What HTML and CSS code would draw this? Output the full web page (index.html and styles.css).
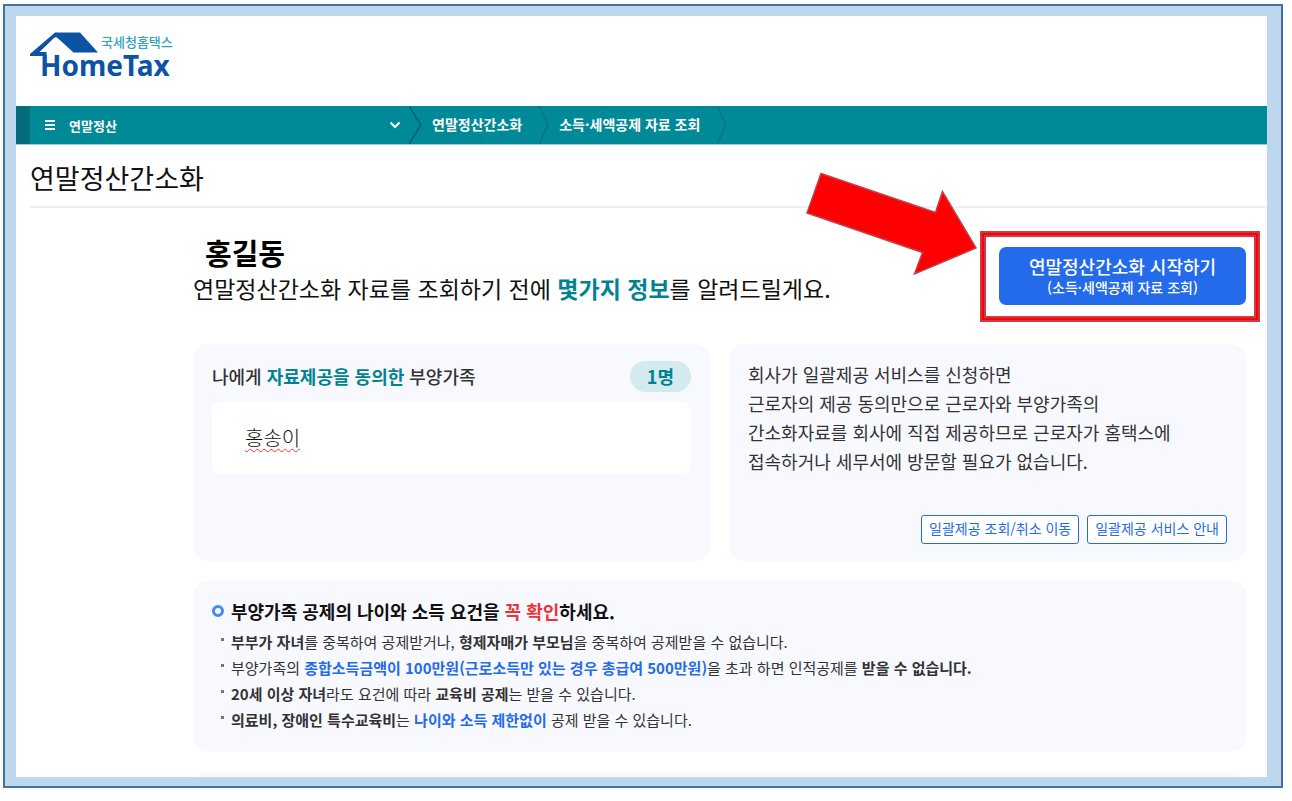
FILE: index.html
```html
<!DOCTYPE html>
<html lang="ko">
<head>
<meta charset="utf-8">
<title>연말정산간소화 - HomeTax</title>
<link rel="stylesheet" href="styles.css">
</head>
<body>
<div class="frame">
  <div class="panel">
    <header class="header">
      <a class="logo" href="#" aria-label="국세청홈택스 HomeTax">
        <svg class="logo-roof" width="69" height="24" viewBox="0 0 69 24" aria-hidden="true">
          <path fill="#0c52a5" d="M25 .5H50L68 20.5H43.500L27 5.500Q25.500 4.800 24 6L9.500 20H16.500V24H0V22Z"/>
        </svg>
        <span class="logo-ko">국세청홈택스</span>
        <span class="logo-en">HomeTax</span>
      </a>
    </header>

    <nav class="crumbs" aria-label="현재 위치">
      <button class="menu" type="button">
        <svg width="12" height="10" viewBox="0 0 12 10" aria-hidden="true"><path d="M1 1H11M1 5H11M1 9H11" stroke="#fff" stroke-width="2"/></svg>
        <span>연말정산</span>
        <svg class="menu-caret" width="12" height="8" viewBox="0 0 12 8" aria-hidden="true"><path d="M1.500 1.500L6 6L10.500 1.500" fill="none" stroke="#fff" stroke-width="2"/></svg>
      </button>
      <svg class="divider" width="13" height="38" viewBox="0 0 13 38" aria-hidden="true"><path d="M0 0L12 19L0 38" fill="none" stroke="#05616d" stroke-width="1.500"/></svg>
      <a class="crumb" href="#">연말정산간소화</a>
      <svg class="divider" width="10" height="38" viewBox="0 0 10 38" aria-hidden="true"><path d="M0 0L9 19L0 38" fill="none" stroke="#087484" stroke-width="1.500"/></svg>
      <a class="crumb" href="#">소득·세액공제 자료 조회</a>
      <svg class="divider" width="10" height="38" viewBox="0 0 10 38" aria-hidden="true"><path d="M0 0L9 19L0 38" fill="none" stroke="#087484" stroke-width="1.500"/></svg>
    </nav>

    <h1 class="title">연말정산간소화</h1>

    <main class="content">
      <section class="intro">
        <div class="greeting">
          <p class="user">홍길동</p>
          <h2 class="lead">연말정산간소화 자료를 조회하기 전에 <strong>몇가지 정보</strong>를 알려드릴게요.</h2>
        </div>
        <div class="start">
          <button class="start-button" type="button">
            <span class="start-main">연말정산간소화 시작하기</span>
            <span class="start-sub">(소득·세액공제 자료 조회)</span>
          </button>
          <span class="highlight"></span>
          <svg class="pointer" width="172" height="104" viewBox="0 0 172 104" aria-hidden="true">
            <path d="M15 1.500L129.500 40.500L136.500 19.500L170 76L108.500 102L116.500 80.500L1 41Z" fill="#f00" stroke="#c0404d" stroke-width="1.500"/>
          </svg>
        </div>
      </section>

      <div class="cards">
        <section class="card family">
          <div class="family-head">
            <h3>나에게 <strong>자료제공을 동의한</strong> 부양가족</h3>
            <span class="count">1명</span>
          </div>
          <div class="members"><span class="member">홍송이</span></div>
        </section>
        <section class="card bulk">
          <p>회사가 일괄제공 서비스를 신청하면<br>근로자의 제공 동의만으로 근로자와 부양가족의<br>간소화자료를 회사에 직접 제공하므로 근로자가 홈택스에<br>접속하거나 세무서에 방문할 필요가 없습니다.</p>
          <div class="actions">
            <button type="button">일괄제공 조회/취소 이동</button>
            <button type="button">일괄제공 서비스 안내</button>
          </div>
        </section>
      </div>

      <section class="card notice">
        <h3>부양가족 공제의 나이와 소득 요건을 <em>꼭 확인</em>하세요.</h3>
        <ul>
          <li><b>부부가 자녀</b>를 중복하여 공제받거나, <b>형제자매가 부모님</b>을 중복하여 공제받을 수 없습니다.</li>
          <li>부양가족의 <b class="blue">종합소득금액이 100만원(근로소득만 있는 경우 총급여 500만원)</b>을 초과 하면 인적공제를 <b>받을 수 없습니다.</b></li>
          <li><b>20세 이상 자녀</b>라도 요건에 따라 <b>교육비 공제</b>는 받을 수 있습니다.</li>
          <li><b>의료비, 장애인 특수교육비</b>는 <b class="blue">나이와 소득 제한없이</b> 공제 받을 수 있습니다.</li>
        </ul>
      </section>

      <section class="card next"></section>
    </main>
  </div>
</div>
</body>
</html>
```
FILE: styles.css
```css
*, *::before { box-sizing: border-box; }
body, h1, h2, h3, p, ul { margin: 0; padding: 0; }
body {
  height: 100vh;
  padding: 4px 9px 13px 3px;
  background: #fff;
  color: #333;
  font-family: "Noto Sans CJK KR", "Noto Sans", sans-serif;
}
button { font-family: inherit; cursor: pointer; }
a { text-decoration: none; }

.frame {
  height: 100%;
  padding: 10px 14px 9px 11px;
  border: 2px solid #41719c;
  background: #bdd7ee;
}
.panel { height: 100%; overflow: hidden; background: #fff; }

.header { height: 90px; padding: 16px 14px; }
.logo {
  display: grid;
  grid-template-columns: 71px auto;
  grid-template-rows: 20px 26px;
  justify-content: start;
}
.logo-roof { grid-area: 1 / 1; }
.logo-ko {
  grid-area: 1 / 2;
  color: #2ba3bd;
  font-size: 13px;
  font-weight: 500;
  line-height: 20px;
}
.logo-en {
  grid-area: 2 / 1 / 3 / 3;
  padding-left: 10px;
  color: #0c52a5;
  font-family: "Noto Sans", sans-serif;
  font-size: 28px;
  font-weight: 700;
  line-height: 26px;
}

.crumbs {
  display: flex;
  align-items: center;
  height: 38px;
  border-left: 14px solid #046b78;
  background: #008996;
  box-shadow: 0 1px 0 #9cc9ce;
}
.menu {
  display: flex;
  align-items: center;
  gap: 13px;
  width: 379px;
  height: 38px;
  padding: 0 8px 0 14px;
  border: 0;
  background: none;
  color: #fff;
  font-size: 13px;
  font-weight: 700;
}
.menu-caret { margin-left: auto; }
.divider { flex: none; }
.crumb {
  padding: 0 17px 0 10px;
  color: #fff;
  font-size: 14px;
  font-weight: 700;
  line-height: 36px;
  height: 38px;
}

.title {
  margin-left: 14px;
  padding: 14px 0 8px;
  border-bottom: 2px solid #eee;
  color: #111;
  font-size: 27px;
  font-weight: 400;
  line-height: 40px;
}

.content { padding: 24px 21px 0 177px; }
.intro {
  display: flex;
  justify-content: space-between;
  align-items: flex-start;
  height: 112px;
}
.user {
  padding-left: 12px;
  color: #000;
  font-size: 29px;
  font-weight: 700;
  line-height: 40px;
}
.lead {
  color: #111;
  font-size: 23px;
  font-weight: 400;
  line-height: 32px;
}
.lead strong { color: #008391; font-weight: 700; }
.start { position: relative; padding-top: 15px; }
.start-button {
  display: flex;
  flex-direction: column;
  align-items: center;
  justify-content: center;
  width: 247px;
  height: 58px;
  border: 0;
  border-radius: 7px;
  background: #246beb;
  color: #fff;
  font-weight: 500;
}
.start-main { font-size: 18px; line-height: 22px; }
.start-sub { font-size: 14px; line-height: 20px; }
.highlight {
  position: absolute;
  inset: -1px -14px -17px -19px;
  border: 2px solid #d03a48;
  box-shadow: inset 0 0 0 2px #f00, inset 0 0 0 4px #d03a48;
  pointer-events: none;
}
.pointer { position: absolute; top: -60px; right: 268px; }

.cards {
  display: grid;
  grid-template-columns: 1fr 1fr;
  gap: 19px;
  margin-bottom: 20px;
}
.card { border-radius: 15px; background: #f8f9ff; }
.family { padding: 17px 19px 19px; }
.family-head {
  display: flex;
  justify-content: space-between;
  align-items: center;
  margin-bottom: 10px;
}
.family h3 { font-size: 18px; font-weight: 500; line-height: 31px; }
.family strong { color: #008391; font-weight: 700; }
.count {
  padding: 0 17px;
  border-radius: 16px;
  background: #d3ebee;
  color: #008391;
  font-size: 18px;
  font-weight: 700;
  line-height: 31px;
}
.members {
  padding: 20px 33px;
  border-radius: 9px;
  background: #fff;
}
.member {
  color: #111;
  font-size: 20px;
  font-weight: 300;
  line-height: 32px;
  text-decoration: underline wavy #f33 1px;
  text-underline-offset: 2px;
}
.bulk {
  display: flex;
  flex-direction: column;
  justify-content: space-between;
  min-height: 217px;
  padding: 16px 19px 17px;
}
.bulk p { font-size: 18px; line-height: 29px; }
.actions { display: flex; justify-content: flex-end; gap: 8px; }
.actions button {
  height: 29px;
  padding: 0 7px 2px;
  border: 1px solid #246beb;
  border-radius: 3px;
  background: #fff;
  color: #246beb;
  font-size: 14px;
  line-height: 25px;
}

.notice { padding: 16px 19px 19px; margin-bottom: 20px; }
.notice h3 {
  display: flex;
  align-items: center;
  white-space: pre;
  color: #111;
  font-size: 18px;
  font-weight: 700;
  line-height: 28px;
}
.notice h3::before {
  content: "";
  width: 12px;
  height: 12px;
  margin-right: 7px;
  border: 3px solid #4a86f0;
  border-radius: 50%;
}
.notice em { color: #f03038; font-style: normal; }
.notice ul { padding: 4px 0 0; list-style: none; }
.notice li {
  padding-left: 19px;
  background: linear-gradient(#777, #777) 9px 9px / 3px 3px no-repeat;
  font-size: 15px;
  line-height: 26px;
}
.notice b { font-weight: 700; }
.blue { color: #246beb; }
.next { height: 120px; }
```
